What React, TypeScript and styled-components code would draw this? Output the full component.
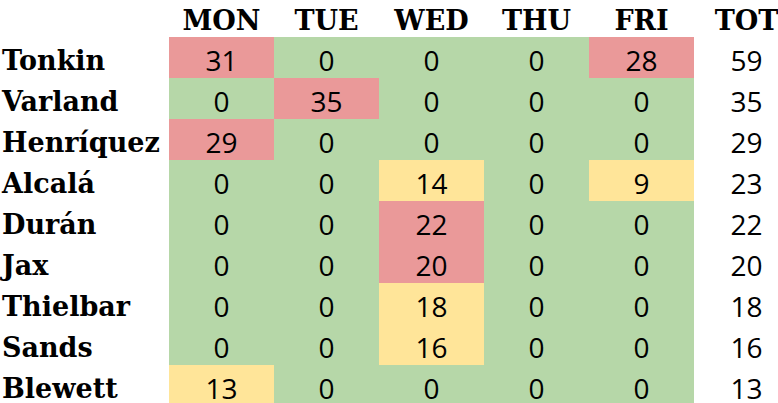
import styled, { createGlobalStyle } from "styled-components";

const GlobalStyle = createGlobalStyle`
    html, body {
        margin: 0;
        padding: 0;
        background: #ffffff;
        overflow: hidden;
    }
`;

type Tone = "low" | "mid" | "high";

const toneColors: Record<Tone, string> = {
    low: "#b6d7a8",
    mid: "#ffe599",
    high: "#ea9999",
};

const Grid = styled.div`
    display: grid;
    grid-template-columns: 169px repeat(6, 105px);
    grid-template-rows: 37px;
    grid-auto-rows: 41px;
    width: 799px;
`;

const HeadCell = styled.div`
    display: flex;
    align-items: center;
    justify-content: center;
    padding-top: 3px;
    font-family: "DejaVu Serif", serif;
    font-weight: bold;
    font-size: 27px;
    color: #000;
`;

const NameCell = styled.div`
    display: flex;
    align-items: center;
    padding-left: 2px;
    padding-top: 5px;
    font-family: "DejaVu Serif", serif;
    font-weight: bold;
    font-size: 27px;
    color: #000;
    white-space: nowrap;
`;

const ValueCell = styled.div<{ tone?: Tone }>`
    display: flex;
    align-items: center;
    justify-content: center;
    padding-top: 5px;
    font-family: "Open Sans", sans-serif;
    font-size: 28px;
    color: #000;
    background-color: ${props => props.tone ? toneColors[props.tone] : "transparent"};
`;

const days = ["MON", "TUE", "WED", "THU", "FRI"];

const rows: [string, number[]][] = [
    ["Tonkin", [31, 0, 0, 0, 28]],
    ["Varland", [0, 35, 0, 0, 0]],
    ["Henríquez", [29, 0, 0, 0, 0]],
    ["Alcalá", [0, 0, 14, 0, 9]],
    ["Durán", [0, 0, 22, 0, 0]],
    ["Jax", [0, 0, 20, 0, 0]],
    ["Thielbar", [0, 0, 18, 0, 0]],
    ["Sands", [0, 0, 16, 0, 0]],
    ["Blewett", [13, 0, 0, 0, 0]],
];

const toneFor = (value: number): Tone => {
    if (value >= 20) return "high";
    if (value > 0) return "mid";
    return "low";
};

const App = (): JSX.Element => {
    return <>
        <GlobalStyle />
        <Grid>
            <div />
            {days.map(day => <HeadCell key={day}>{day}</HeadCell>)}
            <HeadCell>TOT</HeadCell>

            {rows.map(([name, values]) => <>
                <NameCell key={name}>{name}</NameCell>
                {values.map((v, i) => <ValueCell key={name + i} tone={toneFor(v)}>{v}</ValueCell>)}
                <ValueCell key={name + "tot"}>{values.reduce((a, b) => a + b, 0)}</ValueCell>
            </>)}
        </Grid>
    </>;
}

export default App;
